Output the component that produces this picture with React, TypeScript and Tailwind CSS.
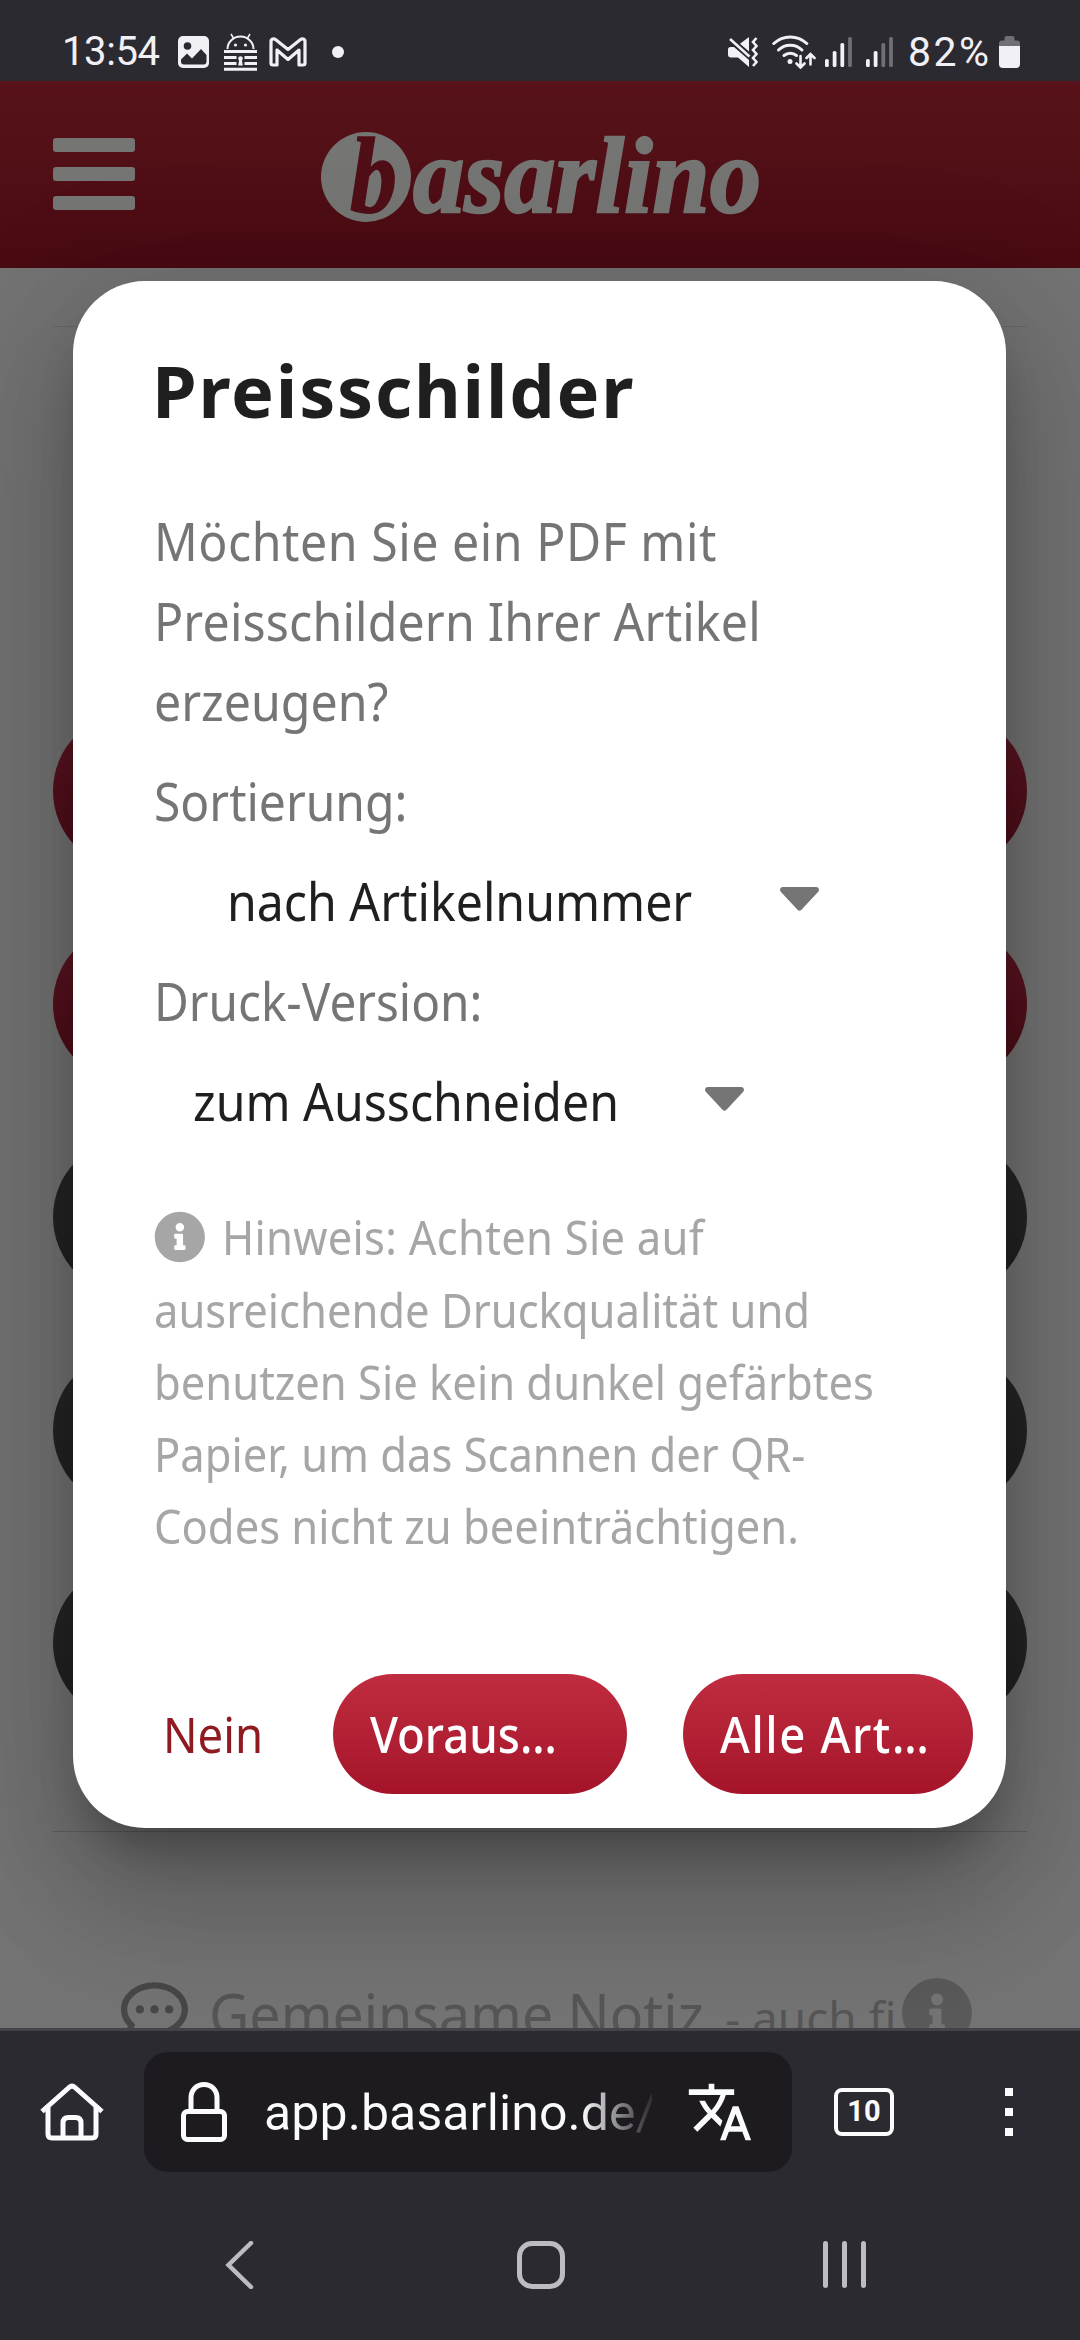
import React from 'react';
import { FaInfoCircle, FaRegCommentDots } from 'react-icons/fa';
import { MdTranslate } from 'react-icons/md';

const menuButtons = [
  { id: 1, color: 'from-[#5e1825] to-[#4a0a13]' },
  { id: 2, color: 'from-[#5e1825] to-[#4a0a13]' },
  { id: 3, color: 'from-[#272727] to-[#212121]' },
  { id: 4, color: 'from-[#272727] to-[#212121]' },
  { id: 5, color: 'from-[#272727] to-[#212121]' },
];

function Signal({ level }: { level: number }) {
  const tops = [22, 14, 6, 0];
  return (
    <svg width="28" height="30" viewBox="0 0 28 30">
      {tops.map((top, i) => (
        <rect key={top} x={i * 7.7} y={top} width="3.8" height={30 - top} rx="1.6" fill={i < level ? '#f1f0f5' : '#706f74'} />
      ))}
    </svg>
  );
}

function StatusBar() {
  return (
    <div className="flex h-[81px] items-center bg-[#2b2a30] pt-[22px] pr-[60px] pl-[62px] text-[#f1f0f5]">
      <span className="w-[104px] text-[40px] leading-[44px] tracking-[-0.4px]">13:54</span>

      {/* Picture */}
      <svg className="ml-3" width="31" height="32" viewBox="0 0 31 32">
        <rect width="31" height="32" rx="5" fill="#f1f0f5" />
        <circle cx="9.500" cy="10" r="3.800" fill="#2b2a30" />
        <path d="M3 23.500l6-6 5 5 9-9.500 5.500 6v6.500a3 3 0 0 1-3 3h-19.500a3 3 0 0 1-3-3z" fill="#2b2a30" />
      </svg>

      {/* Android locker */}
      <svg className="ml-[15px]" width="33" height="38" viewBox="0 0 33 38">
        <path d="M3.500 16a13 12.500 0 0 1 26 0" fill="none" stroke="#f1f0f5" strokeWidth="2" />
        <path d="M7 1l3 5M26 1l-3 5" stroke="#f1f0f5" strokeWidth="1.500" />
        <circle cx="11.500" cy="12" r="1.600" fill="#f1f0f5" />
        <circle cx="21.500" cy="12" r="1.600" fill="#f1f0f5" />
        <path d="M0 18.500h33M0 24.500h12.500M20.500 24.500h12.500M0 30.500h12.500M20.500 30.500h12.500M0 36.200h33" stroke="#f1f0f5" strokeWidth="3" />
        <circle cx="16.500" cy="25.500" r="2.300" fill="#f1f0f5" />
        <path d="M15.500 25h2l1.300 7.500h-4.600z" fill="#f1f0f5" />
      </svg>

      {/* Mail */}
      <svg className="ml-[12px]" width="38" height="30" viewBox="0 0 38 30">
        <path d="M2 26V4.500c0-2.800 3-3.200 4.500-1.900L19 12.500 31.500 2.600C33 1.300 36 1.700 36 4.500V26c0 1-.8 2-1.800 2H30V13l-11 9.500L8 13v15H3.800C2.800 28 2 27 2 26z" fill="none" stroke="#f1f0f5" strokeWidth="3.200" strokeLinejoin="round" />
      </svg>
      <span className="ml-[25px] h-3 w-3 rounded-full bg-[#f1f0f5]" />

      <div className="ml-auto flex items-center">
        {/* Muted, vibrating */}
        <svg width="30" height="30" viewBox="0 0 30 30">
          <path d="M21 0v14.500L12 6.800zM0 12.500a2.500 2.500 0 0 1 2.500-2.500H6l15 13v7L10 20.500H3A3 3 0 0 1 0 17.500z" fill="#f1f0f5" />
          <path d="M2 2l19.500 17.500" stroke="#f1f0f5" strokeWidth="2.600" />
          <path d="M28.500 1l-3.500 4 3.500 4-3.500 4 3.500 4-3.500 4 3.500 4-3.500 4" fill="none" stroke="#f1f0f5" strokeWidth="2.600" />
        </svg>

        {/* Wifi with traffic arrows */}
        <svg className="ml-[14px]" width="44" height="34" viewBox="0 0 44 34">
          <g fill="none" stroke="#f1f0f5" strokeWidth="3" strokeLinecap="round">
            <path d="M1.800 8.500a24 24 0 0 1 33 0" />
            <path d="M6.500 15a17 17 0 0 1 23.500 0" />
            <path d="M12 20.500a10 10 0 0 1 12.500 0" />
            <path d="M28.500 21v10.500M24.500 28.500l4 4 4-4M38.500 29.500V19.500M34.500 23l4-4 4 4" strokeWidth="2.600" />
          </g>
          <circle cx="18" cy="26.500" r="2.500" fill="#f1f0f5" />
        </svg>
        <div className="ml-[9px] flex gap-[13px]">
          <Signal level={3} />
          <Signal level={2} />
        </div>
        <span className="ml-[14px] w-[88px] text-[41px] leading-[44px] tracking-[2.5px]">82%</span>
        <svg className="ml-[3px]" width="21" height="32" viewBox="0 0 21 32">
          <path d="M5.500 2a2 2 0 0 1 2-2h6a2 2 0 0 1 2 2v2.500H18a3 3 0 0 1 3 3V12H0V7.500a3 3 0 0 1 3-3h2.500z" fill="#706f74" />
          <path d="M0 10h21v18a4 4 0 0 1-4 4H4a4 4 0 0 1-4-4z" fill="#f1f0f5" />
        </svg>
      </div>
    </div>
  );
}

function Header() {
  return (
    <header className="flex h-[187px] items-center bg-linear-to-b from-[#58131a] to-[#490a12] pl-[53px]">
      <button className="mb-[2px] flex flex-col gap-[15px]">
        <span className="h-[14px] w-[82px] rounded-[3px] bg-[#757573]" />
        <span className="h-[14px] w-[82px] rounded-[3px] bg-[#757573]" />
        <span className="h-[14px] w-[82px] rounded-[3px] bg-[#757573]" />
      </button>
      <svg className="mt-[5px] ml-[176px] overflow-visible" width="460" height="152" viewBox="-10 -30 460 152">
        <circle cx="45" cy="46" r="45" fill="#757573" />
        <g fontFamily="'Liberation Serif', serif" fontWeight="700" fontStyle="italic" fontSize="109">
          <text x="29" y="81" fill="#500e17" stroke="#500e17" strokeWidth="1.500" textLength="47" lengthAdjust="spacingAndGlyphs">b</text>
          <text x="92" y="81" fill="#757573" stroke="#757573" strokeWidth="2.500" textLength="348" lengthAdjust="spacingAndGlyphs">asarlino</text>
        </g>
      </svg>
    </header>
  );
}

function Select({ value, className }: { value: string; className: string }) {
  return (
    <div className={`flex h-20 items-center text-[#1f1f1f] ${className}`}>
      <span className="origin-left scale-x-[0.91] whitespace-nowrap">{value}</span>
      <svg className="mb-1" width="39" height="24" viewBox="0 0 39 24">
        <path d="M3 0h33c2.700 0 4 3 2 5L21.500 22.800c-1.200 1.200-2.800 1.200-4 0L1 5C-1 3 .3 0 3 0z" fill="#757575" />
      </svg>
    </div>
  );
}

function PriceTagDialog() {
  return (
    <div className="absolute inset-0 flex items-start justify-center pt-[200px] pr-px">
      <div className="flex h-[1547px] w-[933px] flex-col rounded-[72px] bg-white pt-[69px] pl-[81px] shadow-[0_33px_45px_-15px_rgba(0,0,0,0.26),0_72px_114px_9px_rgba(0,0,0,0.14),0_27px_138px_24px_rgba(0,0,0,0.12)]">
        <h2 className="ml-[-2px] text-[72px] leading-20 font-bold tracking-[1.8px] whitespace-nowrap text-[#1f1f1f]">Preisschilder</h2>

        <div className="mt-[71px] flex flex-col gap-5 text-[53px] leading-20 text-[#757575]">
          <p className="origin-left scale-x-[0.91] whitespace-nowrap">
            <span className="tracking-[0.6px]">Möchten Sie ein PDF mit</span>
            <br />
            <span className="tracking-[0.2px]">Preisschildern Ihrer Artikel</span>
            <br />
            erzeugen?
          </p>
          <p className="origin-left scale-x-[0.905]">Sortierung:</p>
          <Select value="nach Artikelnummer" className="gap-[42px] pl-[73px]" />
          <p className="origin-left scale-x-[0.9]">Druck-Version:</p>
          <Select value="zum Ausschneiden" className="gap-[44px] pl-[39px]" />
        </div>

        <p className="mt-[60px] origin-left scale-x-[0.907] text-[48px] leading-18 whitespace-nowrap text-[#a6a6a6]">
          <FaInfoCircle className="mr-[18px] mb-[11px] inline h-[52px] w-[57px]" preserveAspectRatio="none" />
          <span className="tracking-[0.3px]">Hinweis: Achten Sie auf</span>
          <br />
          ausreichende Druckqualität und
          <br />
          benutzen Sie kein dunkel gefärbtes
          <br />
          Papier, um das Scannen der QR-
          <br />
          Codes nicht zu beeinträchtigen.
        </p>

        <div className="mt-auto mb-[34px] flex h-30 items-center text-[50px] leading-none text-white">
          <button className="ml-[9px] w-[170px] text-left text-[#8f1a20]">
            <span className="inline-block origin-left scale-x-[0.91]">Nein</span>
          </button>
          <button className="h-30 w-[294px] rounded-full bg-linear-to-b from-[#c02c40] to-[#a41329] pl-[37px] text-left font-medium">
            <span className="inline-block origin-left scale-x-[0.91]">Voraus…</span>
          </button>
          <button className="ml-14 h-30 w-[290px] rounded-full bg-linear-to-b from-[#c02c40] to-[#a41329] pl-[37px] text-left font-medium">
            <span className="inline-block origin-left scale-x-[0.91] tracking-[1.8px] whitespace-nowrap">Alle Art…</span>
          </button>
        </div>
      </div>
    </div>
  );
}

function Page() {
  return (
    <main className="relative h-[1950px] overflow-hidden bg-[#737373] font-['Noto_Sans',sans-serif]">
      <Header />
      <div className="mx-[53px] mt-[58px] border-t border-[#666]" />
      <div className="mx-[53px] mt-[385px] flex flex-col gap-[55px]">
        {menuButtons.map((button) => (
          <div key={button.id} className={`h-[158px] rounded-full bg-linear-to-b ${button.color}`} />
        ))}
      </div>
      <div className="mx-[53px] mt-[109px] border-t border-[#606060]" />
      <div className="mt-[145px] flex h-[72px] items-center pl-[121px] text-[#555]">
        <FaRegCommentDots className="mt-[-4px] h-[67px] w-[67px] text-[#474747]" />
        <span className="ml-[21px] origin-left scale-x-[0.94] text-[59px] whitespace-nowrap">Gemeinsame Notiz</span>
        <span className="ml-[-10px] w-[176px] pt-2 text-[46px] whitespace-nowrap">- auch fi</span>
        <FaInfoCircle className="h-[72px] w-[72px] text-[#595959]" />
      </div>
      <PriceTagDialog />
      <div className="absolute inset-x-0 bottom-0 h-[3px] bg-[#444347]" />
    </main>
  );
}

function Toolbar() {
  return (
    <div className="flex h-[162px] items-center bg-[#2b2a30] pl-10 text-[#fbfbfe]">
      <svg width="64" height="58" viewBox="0 0 64 58" fill="none" stroke="#fbfbfe" strokeWidth="5">
        <path d="M2 28.500L29 4.500c1.800-1.600 4.200-1.600 6 0L62 28.500" />
        <path d="M8 24v27c0 2.500 1.500 4 4 4h40c2.500 0 4-1.500 4-4V24" />
        <path d="M23 55V40c0-3.500 2-5.500 5.500-5.500h7c3.500 0 5.500 2 5.500 5.500v15" />
      </svg>
      <div className="ml-10 flex h-30 w-[648px] items-center rounded-[24px] bg-[#1d1b20] pl-[37px]">
        <svg width="46" height="60" viewBox="0 0 46 60" fill="none" stroke="#fbfbfe" strokeWidth="5">
          <rect x="2.500" y="29.500" width="41" height="28" rx="4" />
          <path d="M10 29V16C10 8 15.500 2.500 23 2.500S36 8 36 16v13" />
        </svg>
        <span className="mt-[2px] ml-[37px] w-[388px] bg-linear-to-r from-[#fbfbfe] from-82% to-[#1d1b20] to-[102%] bg-clip-text text-[50px] tracking-[0.1px] whitespace-nowrap text-transparent">
          app.basarlino.de/
        </span>
        <MdTranslate className="ml-[34px] h-[68px] w-[68px]" />
      </div>
      <div className="ml-[42px] flex h-12 w-15 items-center justify-center rounded-[8px] border-[4.5px] border-[#fbfbfe] text-[29px] leading-none font-bold">
        <span className="mb-[2px]">10</span>
      </div>
      <div className="ml-[111px] flex flex-col gap-3">
        <span className="h-2 w-2 bg-[#fbfbfe]" />
        <span className="h-2 w-2 bg-[#fbfbfe]" />
        <span className="h-2 w-2 bg-[#fbfbfe]" />
      </div>
    </div>
  );
}

function NavBar() {
  return (
    <div className="flex h-[147px] items-start bg-[#2b2a30] pt-[48px] pl-[225px]">
      <svg width="29" height="48" viewBox="0 0 29 48">
        <path d="M26 2L3.500 24 26 46" fill="none" stroke="#bdbcc2" strokeWidth="4.500" strokeLinecap="round" />
      </svg>
      <div className="ml-[263px] h-12 w-12 rounded-[15px] border-5 border-[#bdbcc2]" />
      <div className="ml-[258px] flex gap-[14px]">
        <span className="h-[47px] w-[5px] rounded-full bg-[#bdbcc2]" />
        <span className="h-[47px] w-[5px] rounded-full bg-[#bdbcc2]" />
        <span className="h-[47px] w-[5px] rounded-full bg-[#bdbcc2]" />
      </div>
    </div>
  );
}

export default function App() {
  return (
    <div className="flex h-[2340px] w-[1080px] flex-col overflow-hidden bg-[#2b2a30] font-[Roboto,sans-serif]">
      <StatusBar />
      <Page />
      <Toolbar />
      <NavBar />
    </div>
  );
}
